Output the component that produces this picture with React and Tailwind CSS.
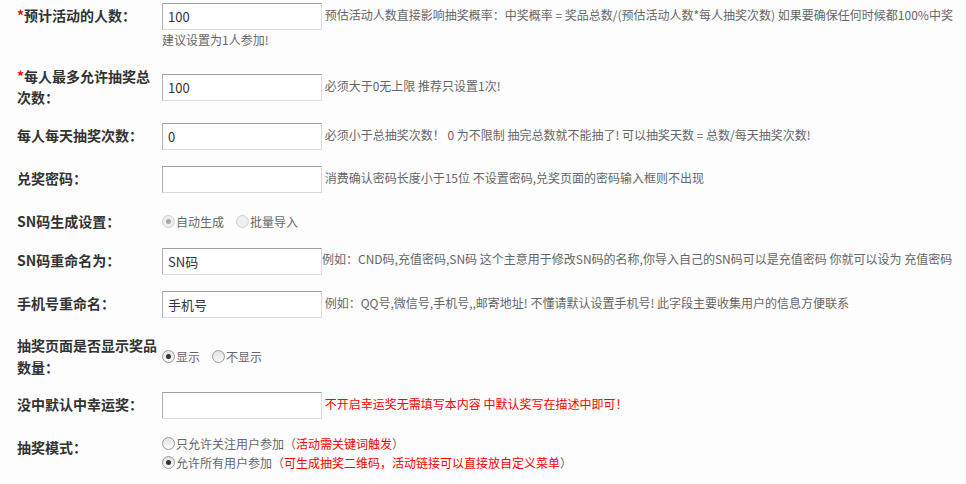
import React from 'react';
import clsx from 'clsx';

const font = { fontFamily: '"Noto Sans CJK SC", "Liberation Sans", sans-serif' };

const labelCls = "w-[145px] shrink-0 text-[14px] font-bold leading-[20px] text-[#333]";
const helpCls = "flex-1 text-[12px] leading-[20px] text-[#666]";
const inputCls = "inline-block align-middle h-[27px] w-[160px] border border-[#dcdcdc] border-t-[#a0a0a0] border-l-[#b0b0b0] bg-white px-[5px] text-[13px] text-[#333] outline-none";

const Star = () => <span className="text-[#f00]">*</span>;

const Radio = ({ checked, disabled }) => (
    <span
        className={clsx(
            "inline-flex h-[13px] w-[13px] shrink-0 items-center justify-center rounded-full border align-[-2px]",
            disabled ? "border-[#d0d0d0] bg-[#efefef]" : "border-[#9a9a9a] bg-linear-to-b from-[#e2e2e2] to-[#fafafa]"
        )}
    >
        {checked && <span className={clsx("h-[5px] w-[5px] rounded-full", disabled ? "bg-[#a8a8a8]" : "bg-[#333]")} />}
    </span>
);

const Row = ({ label, center, children, labelClass, className }) => (
    <div className={clsx("flex", center ? "items-center" : "items-start", className)}>
        <div className={clsx(labelCls, !center && "pt-[2px]", labelClass)}>{label}</div>
        <div className={helpCls}>{children}</div>
    </div>
);

export default function App() {
    return (
        <div style={font} className="min-h-screen bg-[#fdfdfd] pl-[17px] pt-[3px]">
            <div className="flex flex-col gap-[16px]">
                <Row label={<><Star />预计活动的人数：</>}>
                    <span className="whitespace-nowrap">
                        <input className={inputCls} defaultValue="100" />{' '}
                        预估活动人数直接影响抽奖概率：中奖概率 = 奖品总数/(预估活动人数*每人抽奖次数) 如果要确保任何时候都100%中奖
                    </span>
                    <br />
                    建议设置为1人参加!
                </Row>

                <Row
                    center
                    label={<><Star /><span>每人最多允许抽奖总</span><br /><span>次数：</span></>}
                    labelClass="leading-[21px]"
                >
                    <input className={inputCls} defaultValue="100" />{' '}
                    必须大于0无上限 推荐只设置1次!
                </Row>

                <Row label="每人每天抽奖次数：" className="-mt-[1px]">
                    <input className={inputCls} defaultValue="0" />{' '}
                    必须小于总抽奖次数！ 0 为不限制 抽完总数就不能抽了! 可以抽奖天数 = 总数/每天抽奖次数!
                </Row>

                <Row label="兑奖密码：">
                    <input className={inputCls} defaultValue="" />{' '}
                    消费确认密码长度小于15位 不设置密码,兑奖页面的密码输入框则不出现
                </Row>

                <Row label="SN码生成设置：">
                    <span className="inline-flex items-center">
                        <Radio checked disabled />
                        <span className="ml-[1px] mr-[12px]">自动生成</span>
                        <Radio disabled />
                        <span className="ml-[1px]">批量导入</span>
                    </span>
                </Row>

                <Row label="SN码重命名为：">
                    <span className="whitespace-nowrap">
                        <input className={inputCls} defaultValue="SN码" />
                        例如：CND码,充值密码,SN码 这个主意用于修改SN码的名称,你导入自己的SN码可以是充值密码 你就可以设为 充值密码
                    </span>
                </Row>

                <Row label="手机号重命名：">
                    <input className={inputCls} defaultValue="手机号" />{' '}
                    例如：QQ号,微信号,手机号,,邮寄地址! 不懂请默认设置手机号! 此字段主要收集用户的信息方便联系
                </Row>

                <Row
                    center
                    label={<><span>抽奖页面是否显示奖品</span><br /><span>数量：</span></>}
                    labelClass="leading-[22px]"
                    className="-mb-[2px]"
                >
                    <span className="inline-flex items-center">
                        <Radio checked />
                        <span className="ml-[1px] mr-[12px]">显示</span>
                        <Radio />
                        <span className="ml-[1px]">不显示</span>
                    </span>
                </Row>

                <Row label="没中默认中幸运奖：">
                    <input className={clsx(inputCls, "w-[141px]")} defaultValue="" />{' '}
                    <span className="text-[#f00]">不开启幸运奖无需填写本内容 中默认奖写在描述中即可！</span>
                </Row>

                <Row label="抽奖模式：">
                    <div className="-mt-[1px] flex flex-col leading-[19px]">
                        <span className="inline-flex items-center">
                            <Radio />
                            <span className="ml-[1px]">只允许关注用户参加（<span className="text-[#f00]">活动需关键词触发</span>）</span>
                        </span>
                        <span className="inline-flex items-center">
                            <Radio checked />
                            <span className="ml-[1px]">允许所有用户参加（<span className="text-[#f00]">可生成抽奖二维码，活动链接可以直接放自定义菜单</span>）</span>
                        </span>
                    </div>
                </Row>
            </div>
        </div>
    );
}
